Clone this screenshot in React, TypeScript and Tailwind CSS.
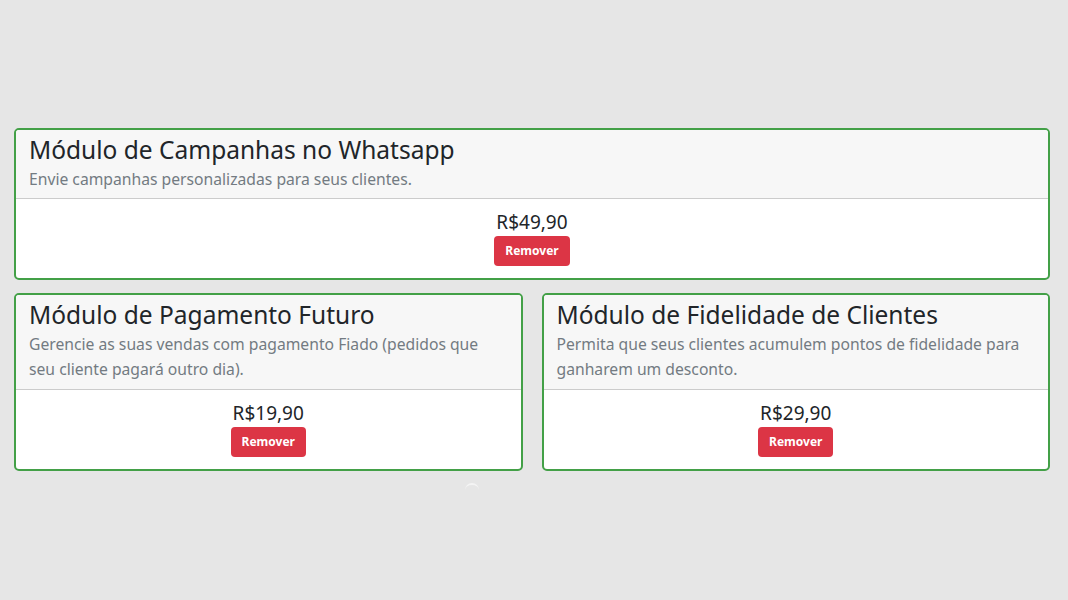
const modules = {
  top: {
    title: 'Módulo de Campanhas no Whatsapp',
    desc: 'Envie campanhas personalizadas para seus clientes.',
    price: 'R$49,90',
  },
  left: {
    title: 'Módulo de Pagamento Futuro',
    desc: 'Gerencie as suas vendas com pagamento Fiado (pedidos que seu cliente pagará outro dia).',
    price: 'R$19,90',
  },
  right: {
    title: 'Módulo de Fidelidade de Clientes',
    desc: 'Permita que seus clientes acumulem pontos de fidelidade para ganharem um desconto.',
    price: 'R$29,90',
  },
};

type Mod = { title: string; desc: string; price: string };

function ModuleCard({ mod }: { mod: Mod }) {
  return (
    <div className="flex-1 border-2 border-[#43a047] rounded-[5px] bg-white overflow-hidden">
      {/* Header */}
      <div className="bg-[#f7f7f7] border-b border-[#cccccc] px-[13px] pt-[3px] pb-[6px]">
        <h3 className="text-[24.5px] leading-[33.6px] text-[#212529] font-normal">{mod.title}</h3>
        <p className="text-[15.7px] leading-[25.6px] text-[#737b82]">{mod.desc}</p>
      </div>
      {/* Body */}
      <div className="flex flex-col items-center pt-[12px] pb-[12px]">
        <span className="text-[19px] leading-[22px] text-[#212529]">{mod.price}</span>
        <button className="mt-[3px] h-[30px] px-[11px] rounded-[4px] bg-[#dc3545] text-white text-[12px] font-bold">
          Remover
        </button>
      </div>
    </div>
  );
}

export default function App() {
  return (
    <div
      className="relative w-full min-h-[600px] bg-[#e6e6e6] pt-[128px] pl-[14px] pr-[18px]"
      style={{ fontFamily: "'Noto Sans', 'Open Sans', sans-serif" }}
    >
      <div className="flex flex-col gap-[13px]">
        <ModuleCard mod={modules.top} />
        <div className="flex gap-[19px]">
          <ModuleCard mod={modules.left} />
          <ModuleCard mod={modules.right} />
        </div>
      </div>
      {/* faint spinner remnant */}
      <div className="absolute left-[465px] top-[483px] w-[14px] h-[14px] rounded-full border-t-2 border-[#f4f4f4]" />
    </div>
  );
}
